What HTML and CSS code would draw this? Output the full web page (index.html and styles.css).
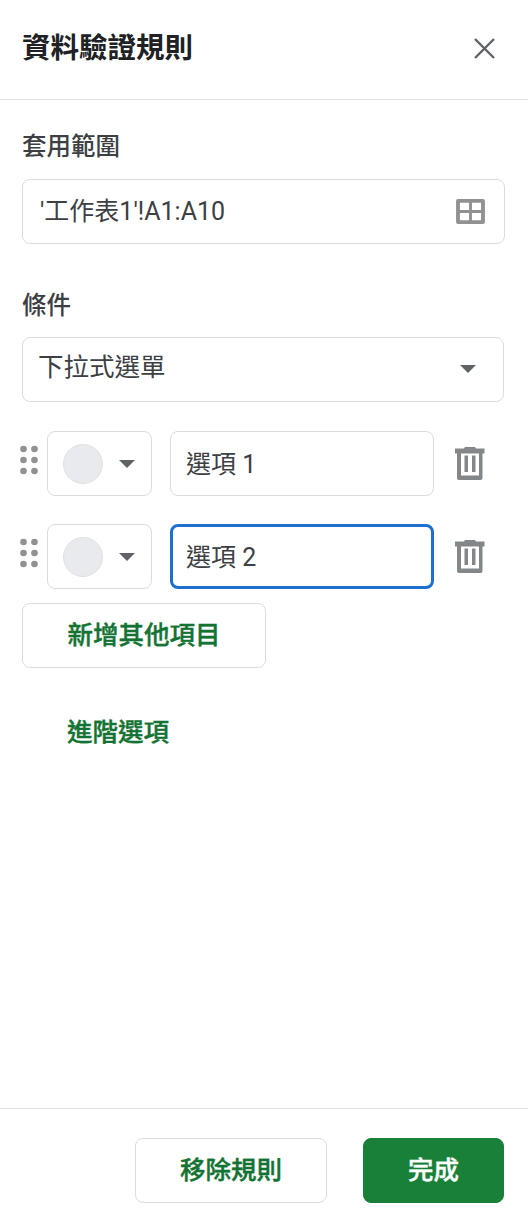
FILE: index.html
```html
<!DOCTYPE html>
<html lang="zh-Hant">
<head>
  <meta charset="UTF-8">
  <title>資料驗證規則</title>
  <link rel="stylesheet" href="styles.css">
</head>
<body>
  <div class="panel">
    <div class="header">
      <h1>資料驗證規則</h1>
      <svg class="close" width="24" height="24" viewBox="0 0 24 24"><path d="M3 3L22 22M22 3L3 22" stroke="#5f6368" stroke-width="2.4" fill="none"/></svg>
    </div>

    <div class="content">
      <div class="label">套用範圍</div>
      <div class="field range">
        <span>'工作表1'!A1:A10</span>
        <svg class="grid-icon" width="29" height="25" viewBox="0 0 30 26"><path fill-rule="evenodd" d="M2 0H28Q30 0 30 2V24Q30 26 28 26H2Q0 26 0 24V2Q0 0 2 0ZM4 4V11.500H13.500V4ZM16.500 4V11.500H26V4ZM4 14.500V22H13.500V14.500ZM16.500 14.500V22H26V14.500Z" fill="#8f9193"/></svg>
      </div>

      <div class="label label-condition">條件</div>
      <div class="field select">
        <span>下拉式選單</span>
        <span class="arrow"></span>
      </div>

      <div class="option first">
        <svg class="drag" width="18" height="30" viewBox="0 0 18 30"><g fill="#8f9193"><circle cx="3.500" cy="4" r="3.300"/><circle cx="14.500" cy="4" r="3.300"/><circle cx="3.500" cy="15" r="3.300"/><circle cx="14.500" cy="15" r="3.300"/><circle cx="3.500" cy="26" r="3.300"/><circle cx="14.500" cy="26" r="3.300"/></g></svg>
        <div class="color">
          <span class="swatch"></span>
          <span class="arrow"></span>
        </div>
        <div class="field option-input">選項 1</div>
        <svg class="trash" width="30" height="34" viewBox="0 0 30 34"><path fill-rule="evenodd" d="M10 0H20L21 1.500H29.500V6.500H27.500V31Q27.500 33 25.500 33H4Q2 33 2 31V6.500H0V1.500H9ZM6 6.500V28.500H24V6.500Z" fill="#84878a"/><path d="M9.500 8.500H13V25H9.500ZM17 8.500H20.500V25H17Z" fill="#84878a"/></svg>
      </div>

      <div class="option">
        <svg class="drag" width="18" height="30" viewBox="0 0 18 30"><g fill="#8f9193"><circle cx="3.500" cy="4" r="3.300"/><circle cx="14.500" cy="4" r="3.300"/><circle cx="3.500" cy="15" r="3.300"/><circle cx="14.500" cy="15" r="3.300"/><circle cx="3.500" cy="26" r="3.300"/><circle cx="14.500" cy="26" r="3.300"/></g></svg>
        <div class="color">
          <span class="swatch"></span>
          <span class="arrow"></span>
        </div>
        <div class="field option-input focused">選項 2</div>
        <svg class="trash" width="30" height="34" viewBox="0 0 30 34"><path fill-rule="evenodd" d="M10 0H20L21 1.500H29.500V6.500H27.500V31Q27.500 33 25.500 33H4Q2 33 2 31V6.500H0V1.500H9ZM6 6.500V28.500H24V6.500Z" fill="#84878a"/><path d="M9.500 8.500H13V25H9.500ZM17 8.500H20.500V25H17Z" fill="#84878a"/></svg>
      </div>

      <button class="btn add">新增其他項目</button>
      <div class="advanced">進階選項</div>
    </div>

    <div class="footer">
      <button class="btn remove">移除規則</button>
      <button class="btn done">完成</button>
    </div>
  </div>
</body>
</html>
```

FILE: styles.css
```css
html, body {
  margin: 0;
  padding: 0;
  height: 100%;
  background-color: white;
  font-family: "Noto Sans CJK TC", Roboto, sans-serif;
  color: #3c4043;
}
.panel {
  display: flex;
  flex-direction: column;
  height: 1226px;
  box-sizing: border-box;
}
.header {
  display: flex;
  align-items: center;
  justify-content: space-between;
  height: 100px;
  box-sizing: border-box;
  padding: 0 32px 8px 22px;
  border-bottom: 1px solid #e0e0e0;
}
h1 {
  margin: 0;
  font-size: 28.500px;
  font-weight: 700;
  color: #202124;
}
.close {
  margin-top: 4px;
}
.content {
  flex: 1;
  padding: 28px 24px 0 22px;
}
.label {
  font-size: 24.500px;
  line-height: 34px;
  height: 36px;
  font-weight: 500;
  color: #3c4043;
  margin-bottom: 15px;
}
.label-condition {
  margin-top: 43px;
  margin-bottom: 14px;
}
.field {
  box-sizing: border-box;
  height: 65px;
  border: 1px solid #dadce0;
  border-radius: 8px;
  background-color: white;
  font-family: Roboto, "Noto Sans CJK TC", sans-serif;
  font-size: 25px;
  display: flex;
  align-items: center;
}
.range {
  justify-content: space-between;
  padding: 0 19px 0 17px;
  margin-right: -1px;
}
.range span {
  padding-bottom: 5px;
}
.select {
  justify-content: space-between;
  padding: 0 27px 0 15px;
  font-size: 25.500px;
}
.select span:first-child {
  padding-bottom: 10px;
}
.select .arrow {
  margin-bottom: 2px;
}
.arrow {
  display: block;
  width: 0;
  height: 0;
  border-left: 8px solid transparent;
  border-right: 8px solid transparent;
  border-top: 8px solid #5f6368;
}
.option {
  display: flex;
  align-items: center;
  margin-top: 28px;
}
.option.first {
  margin-top: 29px;
}
.drag {
  margin-left: -2px;
  margin-right: 9px;
  margin-top: -7px;
}
.color {
  box-sizing: border-box;
  width: 105px;
  height: 65px;
  border: 1px solid #dadce0;
  border-radius: 8px;
  display: flex;
  align-items: center;
  padding-left: 15px;
  margin-right: 18px;
}
.swatch {
  display: block;
  box-sizing: border-box;
  width: 40px;
  height: 40px;
  border-radius: 50%;
  background-color: #e8eaed;
  border: 1px solid #dfe1e5;
  margin-right: 16px;
}
.option-input {
  width: 264px;
  padding: 0 0 4px 15px;
}
.focused {
  border: 3px solid #1f6fd0;
  padding-left: 13px;
}
.trash {
  margin-left: 21px;
}
.btn {
  box-sizing: border-box;
  height: 65px;
  border-radius: 8px;
  border: 1px solid #dadce0;
  background-color: white;
  font-family: "Noto Sans CJK TC", sans-serif;
  font-size: 25.500px;
  font-weight: 500;
  -webkit-text-stroke: 0.4px;
  color: #137333;
  padding: 0 0 6px;
}
.add {
  display: block;
  width: 244px;
  margin-top: 14px;
}
.advanced {
  margin: 44px 0 0 45px;
  font-size: 25.500px;
  line-height: 36px;
  font-weight: 500;
  -webkit-text-stroke: 0.4px;
  color: #137333;
}
.footer {
  display: flex;
  justify-content: flex-end;
  gap: 36px;
  height: 118px;
  box-sizing: border-box;
  padding: 29px 24px 0 0;
  border-top: 1px solid #e0e0e0;
}
.remove {
  width: 192px;
}
.done {
  width: 141px;
  background-color: #188038;
  border-color: #188038;
  color: white;
}
```
